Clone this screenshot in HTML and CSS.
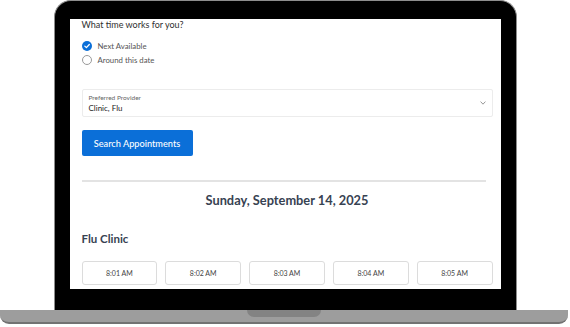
FILE: index.html
```html
<!DOCTYPE html>
<html lang="en">

<head>
    <meta charset="UTF-8" />
    <meta name="viewport" content="width=device-width, initial-scale=1.0" />
    <title>Flu Clinic Booking</title>
    <link rel="stylesheet" href="styles.css">
</head>

<body>
    <div class="laptop">
        <div class="bezel">
            <div class="screen">
                <div class="content">
                    <h2 class="question">What time works for you?</h2>

                    <!-- Time preference -->
                    <div class="options">
                        <div class="option">
                            <span class="check">
                                <svg width="10" height="10" viewBox="0 0 10 10">
                                    <circle cx="5" cy="5" r="5" fill="#0b6fd8" />
                                    <path d="M2.8 5.1 L4.4 6.6 L7.3 3.5" fill="none" stroke="#fff" stroke-width="1.3" stroke-linecap="round" stroke-linejoin="round" />
                                </svg>
                            </span>
                            <span>Next Available</span>
                        </div>
                        <div class="option">
                            <span class="radio"></span>
                            <span>Around this date</span>
                        </div>
                    </div>

                    <!-- Provider select -->
                    <div class="select">
                        <div>
                            <div class="select-label">Preferred Provider</div>
                            <div class="select-value">Clinic, Flu</div>
                        </div>
                        <svg class="chevron" width="6" height="4" viewBox="0 0 6 4">
                            <path d="M0.6 0.6 L3 3.2 L5.4 0.6" fill="none" stroke="#8a8a8a" stroke-width="0.9" />
                        </svg>
                    </div>

                    <button class="search-btn">Search Appointments</button>

                    <div class="divider"></div>

                    <h1 class="date">Sunday, September 14, 2025</h1>

                    <h3 class="clinic">Flu Clinic</h3>

                    <div class="slots">
                        <div class="slot">8:01 AM</div>
                        <div class="slot">8:02 AM</div>
                        <div class="slot">8:03 AM</div>
                        <div class="slot">8:04 AM</div>
                        <div class="slot">8:05 AM</div>
                    </div>
                </div>
            </div>
        </div>
        <div class="base">
            <div class="notch"></div>
        </div>
    </div>
</body>

</html>
```

FILE: styles.css
```css
* {
    margin: 0;
    padding: 0;
    box-sizing: border-box;
    font-family: "Lato", "Liberation Sans", sans-serif;
}

body {
    background-color: #fff;
    width: 570px;
    height: 327px;
    overflow: hidden;
}

/* Laptop frame */

.laptop {
    display: flex;
    flex-direction: column;
    align-items: center;
}

.bezel {
    width: 463px;
    background: #000;
    border: 1px solid #8d8d8d;
    border-bottom: none;
    border-radius: 17px 17px 0 0;
    padding: 18px 14px 21px 15px;
}

.screen {
    width: 431px;
    height: 270px;
    background: #fff;
    overflow: hidden;
}

.base {
    width: 568px;
    height: 14px;
    margin-left: -2px;
    background: #9d9d9d;
    border-bottom: 2px solid #727272;
    border-radius: 0 0 9px 9px;
    display: flex;
    justify-content: center;
}

.notch {
    width: 74px;
    height: 7px;
    background: #838383;
    border-radius: 0 0 7px 7px;
}

/* Screen content */

.content {
    padding: 0 8px 0 12px;
}

.question {
    font-size: 9px;
    font-weight: 400;
    line-height: 12px;
    color: #2f2f2f;
    margin-top: 0;
}

.options {
    margin-top: 8px;
}

.option {
    display: flex;
    align-items: center;
    gap: 6px;
    height: 14px;
    font-size: 7.8px;
    color: #555;
}

.check {
    display: flex;
    width: 10px;
    height: 10px;
}

.radio {
    width: 10px;
    height: 10px;
    border: 1px solid #9a9a9a;
    border-radius: 50%;
}

.select {
    margin-top: 22px;
    height: 28px;
    border: 1px solid #ececec;
    border-radius: 2px;
    display: flex;
    align-items: center;
    justify-content: space-between;
    padding: 0 6px 0 6px;
}

.select-label {
    font-size: 6.5px;
    line-height: 9px;
    color: #666;
}

.select-value {
    font-size: 8px;
    line-height: 11px;
    color: #222;
    margin-top: 1px;
}

.search-btn {
    margin-top: 13px;
    width: 111px;
    height: 26px;
    background: #0b6fd8;
    border: none;
    border-radius: 2px;
    color: #fff;
    font-size: 9.2px;
    font-weight: 500;
}

.divider {
    margin-top: 24px;
    margin-right: 7px;
    height: 2px;
    background: #e3e3e3;
}

.date {
    margin-top: 9px;
    font-size: 12.8px;
    font-weight: 700;
    line-height: 18px;
    color: #374252;
    text-align: center;
}

.clinic {
    margin-top: 22px;
    font-size: 11.5px;
    font-weight: 700;
    line-height: 16px;
    color: #374252;
}

.slots {
    margin-top: 14px;
    display: grid;
    grid-template-columns: repeat(5, 1fr);
    gap: 8px;
}

.slot {
    height: 24px;
    border: 1px solid #dcdcdc;
    border-radius: 3px;
    display: flex;
    align-items: center;
    justify-content: center;
    font-size: 7px;
    color: #444;
}
```
